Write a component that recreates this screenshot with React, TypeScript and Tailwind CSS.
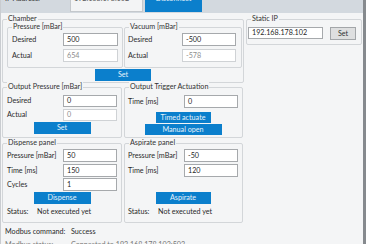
import React from "react";

function Box({ title, className, children }: { title: string; className: string; children?: React.ReactNode }) {
  return (
    <div className={`relative border border-[#d3d6d9] rounded-[2px] ${className}`}>
      <span className="absolute -top-[6px] left-[4px] px-[1px] bg-[#f4f5f6] leading-[10px] text-[#333] whitespace-nowrap">{title}</span>
      {children}
    </div>
  );
}

function Input({ value, muted, className }: { value: string; muted?: boolean; className: string }) {
  return (
    <div
      className={`bg-white border flex items-center pl-[3px] leading-none shrink-0 ${
        muted ? "text-[#8e8e8e] border-[#cfd2d5]" : "text-[#1f1f1f] border-[#a6a9ac]"
      } ${className}`}
    >
      {value}
    </div>
  );
}

function Btn({ label, className }: { label: string; className: string }) {
  return (
    <div className={`bg-[#0b7fcc] text-[#e6f2fb] flex items-center justify-center leading-none whitespace-nowrap ${className}`}>{label}</div>
  );
}

function Row({ label, value, muted, inputW, className }: { label: string; value: string; muted?: boolean; inputW: string; className: string }) {
  return (
    <div className={`flex items-center justify-between ${className}`}>
      <span className="leading-none whitespace-nowrap shrink-0">{label}</span>
      <Input value={value} muted={muted} className={`h-full ${inputW}`} />
    </div>
  );
}

export default function App() {
  return (
    <div className="w-[366px] h-[244px] overflow-hidden bg-[#f4f5f6] border-l border-l-[#c9ccd0] border-r-[3px] border-r-[#868a8e] flex flex-col text-[7.2px] font-['Lato','Noto_Sans',sans-serif] text-[#2a2a2a]">
      {/* top strip */}
      <div className="h-[13px] shrink-0 bg-[#d3d9df] overflow-hidden">
        <div className="h-[24px] -mt-[13px] flex items-center whitespace-nowrap">
          <span className="ml-[4px] w-[65px] shrink-0 text-[#333]">IP Address:</span>
          <div className="w-[73px] h-[26px] shrink-0 bg-[#f3f4f5] border border-[#c4c8cc] flex items-center pl-[3px] text-[#555]">192.168.178.102</div>
          <div className="ml-[2px] w-[57px] h-[26px] shrink-0 bg-[#0b7fcc] text-[#e6f2fb] flex items-center justify-center">Disconnect</div>
        </div>
      </div>

      {/* main */}
      <div className="flex pl-[1px] mt-[6px] shrink-0">
        <div className="flex flex-col w-[242px]">
          {/* Chamber */}
          <Box title="Chamber" className="h-[64px] pt-[7px] flex flex-col">
            <div className="flex pl-[4px] gap-[1px]">
              <Box title="Pressure [mBar]" className="w-[116px] h-[41px] pt-[5px] px-[4px] flex flex-col gap-[3px]">
                <Row label="Desired" value="500" inputW="w-[55px]" className="h-[13px]" />
                <Row label="Actual" value="654" muted inputW="w-[55px]" className="h-[13px]" />
              </Box>
              <Box title="Vacuum [mBar]" className="w-[118px] h-[41px] pt-[5px] pl-[3px] pr-[5px] flex flex-col gap-[3px]">
                <Row label="Desired" value="-500" inputW="w-[54px]" className="h-[13px]" />
                <Row label="Actual" value="-578" muted inputW="w-[54px]" className="h-[13px]" />
              </Box>
            </div>
            <Btn label="Set" className="self-center w-[56px] h-[12px] mt-[1px]" />
          </Box>

          {/* Row 2 */}
          <div className="flex gap-[2px] mt-[4px]">
            <Box title="Output Pressure [mBar]" className="w-[120px] h-[51px] pt-[7px] px-[4px] flex flex-col">
              <Row label="Desired" value="0" inputW="w-[54px]" className="h-[12px]" />
              <Row label="Actual" value="0" muted inputW="w-[54px]" className="h-[12px] mt-[2px]" />
              <Btn label="Set" className="self-center w-[57px] h-[12px] mt-[1px]" />
            </Box>
            <Box title="Output Trigger Actuation" className="w-[119px] h-[51px] pt-[7px] pl-[3px] pr-[4px] flex flex-col">
              <Row label="Time [ms]" value="0" inputW="w-[54px]" className="h-[13px]" />
              <Btn label="Timed actuate" className="self-center w-[55px] h-[11px] mt-[4px]" />
              <Btn label="Manual open" className="self-center w-[77px] h-[11px] mt-[1px]" />
            </Box>
          </div>

          {/* Row 3 */}
          <div className="flex gap-[2px] mt-[5px]">
            <Box title="Dispense panel" className="w-[120px] h-[80px] pt-[5px] px-[4px] flex flex-col">
              <Row label="Pressure [mBar]" value="50" inputW="w-[54px]" className="h-[13px]" />
              <Row label="Time [ms]" value="150" inputW="w-[54px]" className="h-[13px] mt-[2px]" />
              <Row label="Cycles" value="1" inputW="w-[54px]" className="h-[13px] mt-[1px]" />
              <Btn label="Dispense" className="self-center w-[57px] h-[12px] mt-[1px]" />
              <div className="flex h-[11px] items-center mt-[3px] whitespace-nowrap">
                <span className="w-[30px] shrink-0">Status:</span>
                <span>Not executed yet</span>
              </div>
            </Box>
            <Box title="Aspirate panel" className="w-[119px] h-[80px] pt-[5px] pl-[3px] pr-[4px] flex flex-col">
              <Row label="Pressure [mBar]" value="-50" inputW="w-[54px]" className="h-[13px]" />
              <Row label="Time [ms]" value="120" inputW="w-[54px]" className="h-[13px] mt-[2px]" />
              <div className="h-[13px] mt-[1px]" />
              <Btn label="Aspirate" className="self-center w-[55px] h-[12px] mt-[1px]" />
              <div className="flex h-[11px] items-center mt-[3px] whitespace-nowrap">
                <span className="w-[30px] shrink-0">Status:</span>
                <span>Not executed yet</span>
              </div>
            </Box>
          </div>
        </div>

        {/* right column */}
        <div className="ml-[2px] w-[116px]">
          <Box title="Static IP" className="h-[26px] pt-[7px] pl-[1px] flex items-start">
            <Input value="192.168.178.102" className="w-[75px] h-[12px]" />
            <div className="ml-[7px] w-[26px] h-[13px] bg-[#dedfe0] border border-[#a3a6a9] flex items-center justify-center text-[#333] leading-none">Set</div>
          </Box>
        </div>
      </div>

      {/* Modbus */}
      <div className="flex items-center h-[11px] mt-[4px] pl-[4px] shrink-0 whitespace-nowrap">
        <span className="w-[66px] shrink-0">Modbus command:</span>
        <span>Success</span>
      </div>
      <div className="flex items-center h-[11px] mt-[2px] pl-[4px] shrink-0 text-[#777] whitespace-nowrap">
        <span className="w-[66px] shrink-0">Modbus status:</span>
        <span>Connected to 192.168.178.102:502</span>
      </div>
    </div>
  );
}
